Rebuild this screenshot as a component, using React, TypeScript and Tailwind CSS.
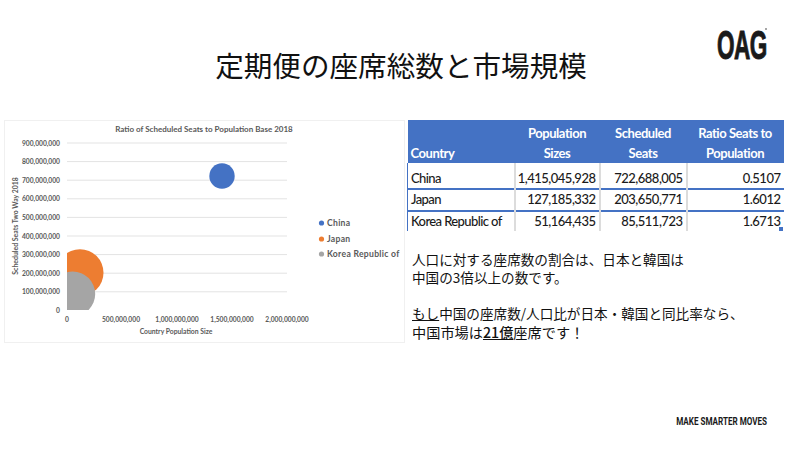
const yTicks = [
  ["900,000,000", 143],
  ["800,000,000", 161.6],
  ["700,000,000", 180.2],
  ["600,000,000", 198.8],
  ["500,000,000", 217.4],
  ["400,000,000", 236],
  ["300,000,000", 254.6],
  ["200,000,000", 273.2],
  ["100,000,000", 291.8],
  ["0", 310],
] as const;

const xTicks = [
  ["0", 67],
  ["500,000,000", 121],
  ["1,000,000,000", 177],
  ["1,500,000,000", 232],
  ["2,000,000,000", 287],
] as const;

const legend = [
  ["China", "#4472c4", 223],
  ["Japan", "#ed7d31", 239],
  ["Korea Republic of", "#a5a5a5", 254],
] as const;

const rows = [
  { name: "China", pop: "1,415,045,928", seats: "722,688,005", ratio: "0.5107", h: "h-[26px]" },
  { name: "Japan", pop: "127,185,332", seats: "203,650,771", ratio: "1.6012", h: "h-[21px]" },
  { name: "Korea Republic of", pop: "51,164,435", seats: "85,511,723", ratio: "1.6713", h: "h-[20px]" },
];

// chart coords are page coords, the viewBox starts inside the card border
const Chart = () => (
  <svg width="399" height="221" viewBox="5 121 399 221" className="block">
    <defs>
      <clipPath id="plot">
        <rect x="67" y="130" width="230" height="180" />
      </clipPath>
    </defs>
    <text x="204" y="132" textAnchor="middle" fontSize="8" fontWeight="700" fill="#595959">
      Ratio of Scheduled Seats to Population Base 2018
    </text>
    {yTicks.map(([label, y]) => (
      <g key={label}>
        {label !== "0" && <line x1="67" x2="287" y1={y} y2={y} stroke="#e3e3e3" strokeWidth="1" />}
        <text x="60" y={y + 2.5} textAnchor="end" fontSize="6.7" fontWeight="700" fill="#595959">
          {label}
        </text>
      </g>
    ))}
    {xTicks.map(([label, x]) => (
      <text key={label} x={x} y="321.5" textAnchor="middle" fontSize="6.7" fontWeight="700" fill="#595959">
        {label}
      </text>
    ))}
    <text x="176" y="333.5" textAnchor="middle" fontSize="6.8" fontWeight="700" fill="#595959">
      Country Population Size
    </text>
    <text
      x="0"
      y="0"
      transform="translate(17.5 226) rotate(-90)"
      textAnchor="middle"
      fontSize="6.9"
      fontWeight="700"
      fill="#595959"
    >
      Scheduled Seats Two Way 2018
    </text>
    <circle cx="222" cy="176" r="12.7" fill="#4472c4" />
    <g clipPath="url(#plot)">
      <circle cx="80" cy="272.7" r="23.5" fill="#ed7d31" />
      <circle cx="72.7" cy="294" r="22.5" fill="#a5a5a5" />
    </g>
    {legend.map(([label, color, y]) => (
      <g key={label}>
        <circle cx="321.5" cy={y} r="2.6" fill={color} />
        <text x="327" y={y + 3} fontSize="8.6" fontWeight="700" fill="#595959" letterSpacing="0.3">
          {label}
        </text>
      </g>
    ))}
  </svg>
);

const App = () => {
  return (
    <div className="w-[800px] h-[450px] bg-white flex flex-col overflow-hidden font-['Liberation_Sans',sans-serif]">
      <header className="relative h-[120px] shrink-0 flex justify-center pt-[45px]">
        <h1 className="ml-[2px] text-[28.6px] leading-[40px] font-normal text-[#111] font-['Noto_Sans_CJK_JP',sans-serif]">
          定期便の座席総数と市場規模
        </h1>
        <span className="absolute left-[717px] top-[25px] text-[41px] leading-[40px] font-bold text-[#1a1a1a] scale-x-[0.55] origin-left tracking-[-1px] [-webkit-text-stroke:1px_#1a1a1a] whitespace-nowrap">
          OAG
        </span>
        <span className="absolute left-[765px] top-[28px] w-[2px] h-[2px] rounded-full bg-[#888]" />
      </header>

      <main className="flex pl-[4px] gap-[2px]">
        <div className="w-[401px] h-[223px] shrink-0 border border-[#f0f0f0] font-['Lato',sans-serif]">
          <Chart />
        </div>

        <div className="w-[376px] shrink-0">
          <div className="relative">
            <table className="w-full border-collapse table-fixed font-['Lato',sans-serif] text-[13px] text-[#1a1a1a] font-medium">
              <colgroup>
                <col className="w-[107px]" />
                <col className="w-[85px]" />
                <col className="w-[87px]" />
                <col className="w-[97px]" />
              </colgroup>
              <thead>
                <tr className="h-[43px] bg-[#4472c4] text-white text-[13px] leading-[20px] tracking-[-0.45px]">
                  <th className="text-left align-bottom pl-[3px] font-bold">Country</th>
                  <th className="text-center align-bottom font-bold">Population<br />Sizes</th>
                  <th className="text-center align-bottom font-bold">Scheduled<br />Seats</th>
                  <th className="text-center align-bottom font-bold">Ratio Seats to<br />Population</th>
                </tr>
              </thead>
              <tbody>
                {rows.map((r, i) => (
                  <tr key={r.name} className={`${r.h} ${i < 2 ? "border-b-2 border-[#4472c4]" : ""}`}>
                    <td className="pl-[3px] align-bottom border-l border-[#4472c4] whitespace-nowrap tracking-[-0.6px]">{r.name}</td>
                    <td className="pr-[3px] text-right align-bottom border-l-2 border-[#dcdcdc] tracking-[-0.5px]">{r.pop}</td>
                    <td className="pr-[3px] text-right align-bottom border-l-2 border-[#dcdcdc] tracking-[-0.5px]">{r.seats}</td>
                    <td className="pr-[3px] text-right align-bottom border-l-2 border-[#dcdcdc] tracking-[-0.5px]">{r.ratio}</td>
                  </tr>
                ))}
              </tbody>
            </table>
            {/* excel selection handle */}
            <span className="absolute right-0 bottom-0 w-[4px] h-[4px] bg-[#4472c4]" />
          </div>

          <div className="mt-[19px] pl-[5px] text-[13.6px] leading-[18.4px] text-[#111] font-['Noto_Sans_CJK_JP',sans-serif]">
            <p>人口に対する座席数の割合は、日本と韓国は</p>
            <p>中国の3倍以上の数です。</p>
            <p className="mt-[17.4px]">
              <span className="underline">もし</span>中国の座席数/人口比が日本・韓国と同比率なら、
            </p>
            <p className="text-[14.2px]">
              中国市場は<span className="underline font-medium">21億</span>座席です！
            </p>
          </div>
        </div>
      </main>

      <footer className="mt-auto flex justify-end pr-[33px] pb-[21px]">
        <span className="text-[10.5px] leading-[14px] font-bold text-[#1a1a1a] font-['Roboto',sans-serif] scale-x-[0.77] origin-right whitespace-nowrap">
          MAKE SMARTER MOVES
        </span>
      </footer>
    </div>
  );
};

export default App;
